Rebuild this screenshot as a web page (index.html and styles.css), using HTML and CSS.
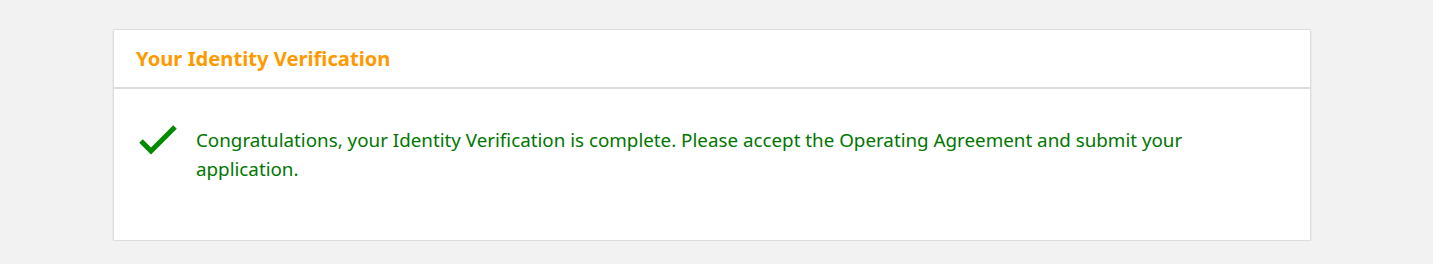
FILE: index.html
```html
<!DOCTYPE html>
<html>
<head>
<meta charset="utf-8">
<link rel="stylesheet" href="styles.css">
</head>
<body>
<div class="page">
  <div class="card">
    <div class="card-header">
      <h2 class="title">Your Identity Verification</h2>
    </div>
    <div class="card-body">
      <svg class="check" width="40" height="30" viewBox="0 0 40 30">
        <path d="M3 16 L13 26 L37 2" fill="none" stroke="#008a00" stroke-width="5"/>
      </svg>
      <p class="message">Congratulations, your Identity Verification is complete. Please accept the Operating Agreement and submit your application.</p>
    </div>
  </div>
</div>
</body>
</html>
```

FILE: styles.css
```css
html, body {
  margin: 0;
  padding: 0;
  background: #f2f2f2;
  font-family: "Noto Sans", "Open Sans", sans-serif;
}
.page {
  padding: 29px 122px 0 113px;
}
.card {
  background: #fff;
  border: 1px solid #dddddd;
  box-shadow: 0 1px 2px rgba(0,0,0,0.12);
  border-radius: 2px;
  height: 212px;
  box-sizing: border-box;
}
.card-header {
  height: 59px;
  box-sizing: border-box;
  border-bottom: 2px solid #dddddd;
  display: flex;
  align-items: center;
  padding: 0 22px 2px;
}
.title {
  margin: 0;
  font-size: 20.2px;
  font-weight: 700;
  color: #ff9900;
}
.card-body {
  display: flex;
  align-items: flex-start;
  padding: 36px 22px 0 24px;
}
.check {
  flex: none;
  margin-right: 18px;
}
.message {
  margin: 1px 0 0;
  max-width: 1010px;
  font-size: 18.8px;
  line-height: 29px;
  color: #007600;
}
```
